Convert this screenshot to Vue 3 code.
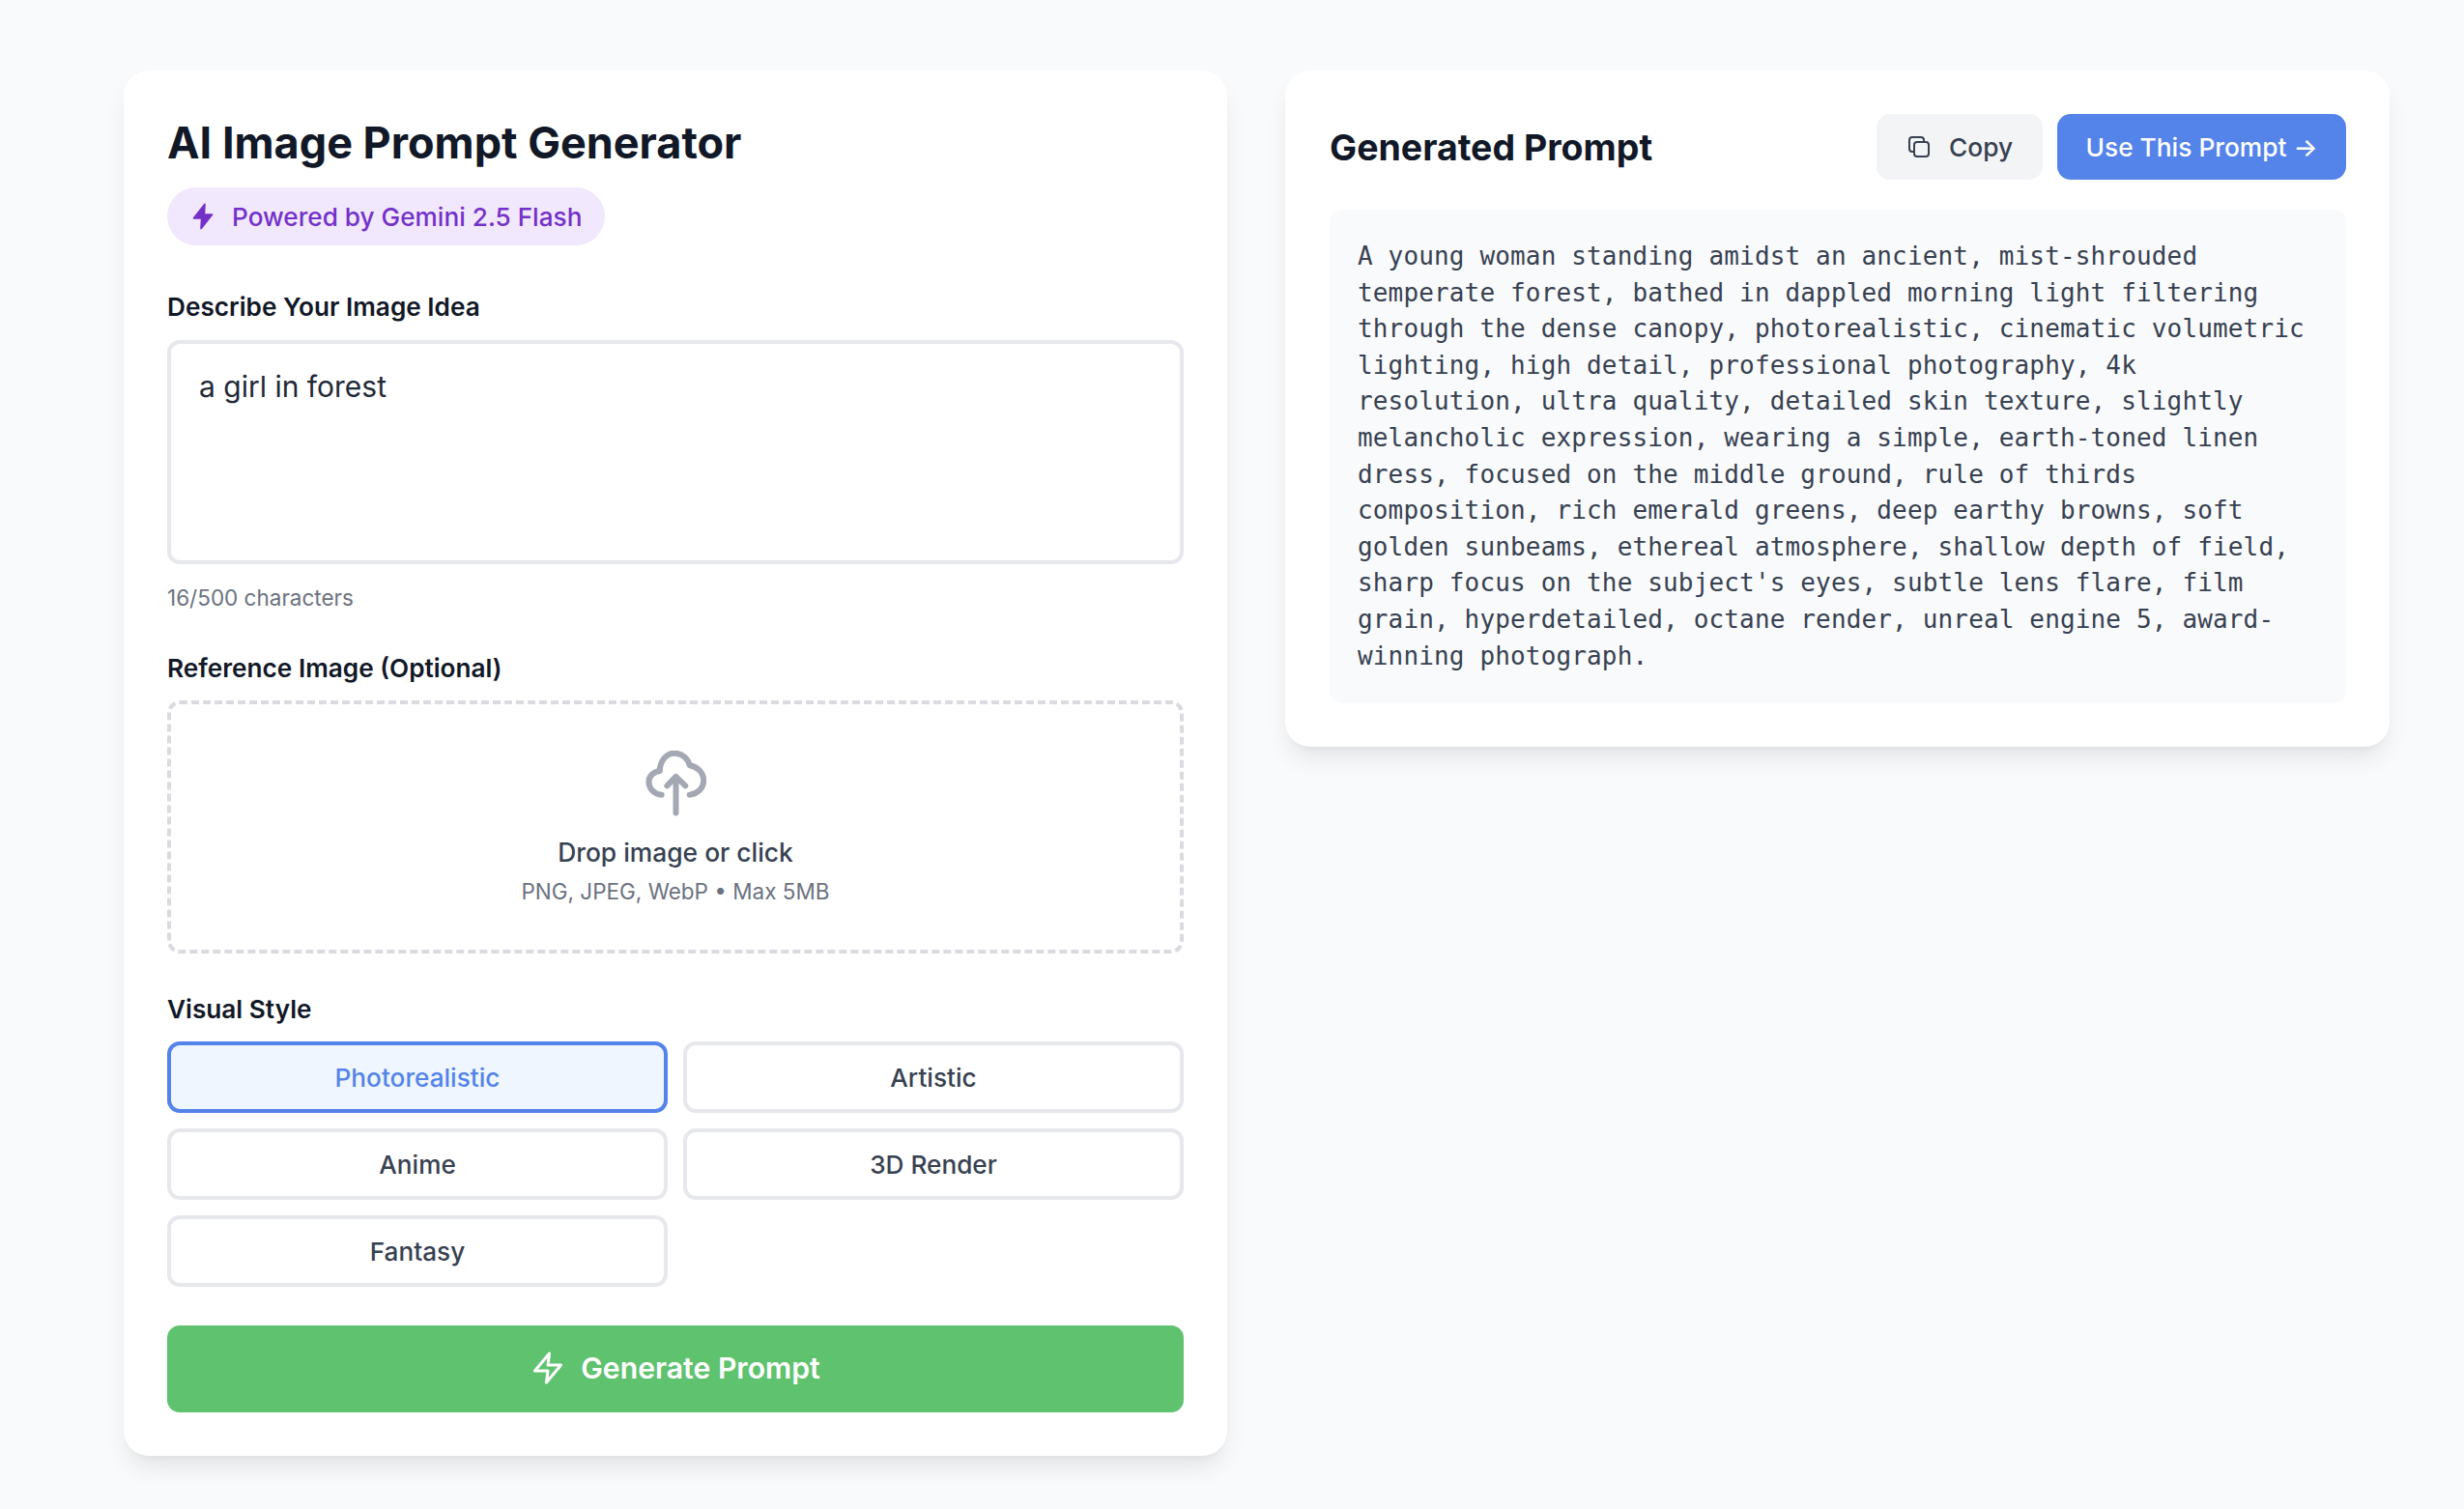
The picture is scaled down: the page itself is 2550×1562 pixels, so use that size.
<script setup>
import { ref } from 'vue'

const idea = ref('a girl in forest')
const activeStyle = ref('Photorealistic')
const styles = ['Photorealistic', 'Artistic', 'Anime', '3D Render', 'Fantasy']
const prompt = "A young woman standing amidst an ancient, mist-shrouded temperate forest, bathed in dappled morning light filtering through the dense canopy, photorealistic, cinematic volumetric lighting, high detail, professional photography, 4k resolution, ultra quality, detailed skin texture, slightly melancholic expression, wearing a simple, earth-toned linen dress, focused on the middle ground, rule of thirds composition, rich emerald greens, deep earthy browns, soft golden sunbeams, ethereal atmosphere, shallow depth of field, sharp focus on the subject's eyes, subtle lens flare, film grain, hyperdetailed, octane render, unreal engine 5, award-winning photograph."
</script>

<template>
  <div class="page">
    <section class="card">
      <h1 class="title">AI Image Prompt Generator</h1>
      <div class="badge">
        <svg class="badge-icon" viewBox="0 0 24 24"><polygon points="13.5 2 4.5 13.5 11 13.5 10.5 22 19.5 10.5 13 10.5 13.5 2" /></svg>
        Powered by Gemini 2.5 Flash
      </div>

      <label class="label first">Describe Your Image Idea</label>
      <textarea class="idea" v-model="idea"></textarea>
      <div class="counter">{{ idea.length }}/500 characters</div>

      <label class="label second">Reference Image (Optional)</label>
      <div class="drop">
        <svg class="cloud" viewBox="-3 0 200 215" fill="none" stroke="#a3a8b2" stroke-width="19" stroke-linecap="round" stroke-linejoin="round">
          <path d="M50 145C25 142 8 125 8 102C8 82 25 68 44 66C44 35 65 8 92 8C118 8 138 28 142 48C168 52 188 72 188 98C188 122 168 142 142 145" />
          <path d="M97 204V85M68 115L97 85L128 115" />
        </svg>
        <div class="drop-title">Drop image or click</div>
        <div class="drop-sub">PNG, JPEG, WebP • Max 5MB</div>
      </div>

      <label class="label third">Visual Style</label>
      <div class="styles">
        <button v-for="s in styles" :key="s" class="style" :class="{ active: s === activeStyle }" @click="activeStyle = s">{{ s }}</button>
      </div>

      <button class="generate">
        <svg class="gen-icon" viewBox="0 0 24 24" fill="none" stroke="#fff" stroke-width="2" stroke-linejoin="round" stroke-linecap="round"><polygon points="13 2 3 14 12 14 11 22 21 10 12 10 13 2" /></svg>
        Generate Prompt
      </button>
    </section>

    <section class="card result">
      <div class="result-head">
        <h2 class="result-title">Generated Prompt</h2>
        <div class="actions">
          <button class="copy">
            <svg class="copy-icon" viewBox="0 0 24 24" fill="none" stroke="#374151" stroke-width="2" stroke-linecap="round" stroke-linejoin="round">
              <rect x="7" y="7" width="15" height="15" rx="3" />
              <path d="M17 7V5a3 3 0 0 0-3-3H5a3 3 0 0 0-3 3v9a3 3 0 0 0 3 3h2" />
            </svg>
            Copy
          </button>
          <button class="use">Use This Prompt →</button>
        </div>
      </div>
      <div class="output">{{ prompt }}</div>
    </section>
  </div>
</template>

<style>
body {
  background: #f9fafb;
}
</style>

<style scoped>
.page {
  display: grid;
  grid-template-columns: 1142px 1142px;
  gap: 60px;
  align-items: start;
  padding: 73px 78px 56px 128px;
  font-family: Inter, "Liberation Sans", sans-serif;
  color: #111827;
}

.card {
  box-sizing: border-box;
  background: #fff;
  border-radius: 26px;
  padding: 45px;
  box-shadow: 0 16px 26px -5px rgba(0, 0, 0, 0.09), 0 6px 10px -6px rgba(0, 0, 0, 0.06);
  display: flex;
  flex-direction: column;
}

.result {
  padding-left: 46px;
  width: 1143px;
}

.title {
  margin: 0;
  font-size: 45px;
  line-height: 60px;
  font-weight: 700;
}

.badge {
  align-self: flex-start;
  display: flex;
  align-items: center;
  gap: 15px;
  height: 60px;
  margin-top: 16px;
  padding: 0 24px 0 22px;
  border-radius: 30px;
  background: #f1e8fd;
  color: #7431c9;
  font-size: 26.2px;
  font-weight: 500;
}

.badge-icon {
  width: 30px;
  height: 30px;
  fill: #7431c9;
  stroke: #7431c9;
  stroke-width: 1.5;
  stroke-linejoin: round;
}

.label {
  display: block;
  font-size: 26.2px;
  line-height: 38px;
  font-weight: 600;
  color: #111827;
}

.label.first {
  margin-top: 45px;
}

.label.second {
  margin-top: 40px;
}

.label.third {
  margin-top: 39px;
}

.idea {
  display: block;
  box-sizing: border-box;
  width: 100%;
  height: 232px;
  margin-top: 15px;
  padding: 24px 29px;
  border: 4px solid #e7e8ec;
  border-radius: 13px;
  font: 400 30px/40px Inter, "Liberation Sans", sans-serif;
  color: #1f2937;
  resize: none;
  outline: none;
}

.counter {
  margin-top: 21px;
  font-size: 22.5px;
  line-height: 28px;
  color: #6b7280;
}

.drop {
  box-sizing: border-box;
  height: 262px;
  margin-top: 14px;
  border: 4px dashed #d9dbe0;
  border-radius: 13px;
  display: flex;
  flex-direction: column;
  align-items: center;
  padding-top: 48px;
}

.cloud {
  width: 63px;
  height: 68px;
}

.drop-title {
  margin-top: 18px;
  font-size: 26.4px;
  line-height: 38px;
  font-weight: 500;
  color: #374151;
}

.drop-sub {
  margin-top: 5px;
  font-size: 22.5px;
  line-height: 34px;
  color: #6b7280;
}

.styles {
  display: grid;
  grid-template-columns: 1fr 1fr;
  gap: 16px;
  margin-top: 14px;
}

button {
  font-family: inherit;
  cursor: pointer;
}

.style {
  height: 74px;
  border: 4px solid #e7e8ec;
  border-radius: 13px;
  background: #fff;
  color: #374151;
  font-size: 26.2px;
  font-weight: 500;
}

.style.active {
  border-color: #5484ea;
  background: #eff6ff;
  color: #5484ea;
}

.generate {
  display: flex;
  align-items: center;
  justify-content: center;
  gap: 16px;
  height: 90px;
  margin-top: 40px;
  padding: 0 0 2px;
  border: 0;
  border-radius: 13px;
  background: #5fc26f;
  color: #fff;
  font-size: 30.2px;
  font-weight: 600;
}

.gen-icon {
  width: 36px;
  height: 36px;
}

.result-head {
  display: flex;
  align-items: center;
  justify-content: space-between;
}

.result-title {
  margin: 0;
  font-size: 37.5px;
  font-weight: 700;
  color: #111827;
}

.actions {
  display: flex;
  gap: 15px;
}

.copy,
.use {
  height: 68px;
  border: 0;
  border-radius: 14px;
  font-size: 26.3px;
  font-weight: 500;
}

.copy {
  display: flex;
  align-items: center;
  gap: 19px;
  width: 172px;
  padding: 0 0 0 1px;
  justify-content: center;
  background: #f3f4f6;
  color: #374151;
}

.copy-icon {
  width: 24px;
  height: 24px;
}

.use {
  width: 299px;
  padding: 0;
  background: #5484ea;
  color: #fff;
}

.output {
  margin-top: 31px;
  padding: 30px 29px 30px;
  background: #f9fafb;
  border-radius: 13px;
  font-family: "DejaVu Sans Mono", monospace;
  font-size: 26px;
  letter-spacing: 0.15px;
  line-height: 37.6px;
  color: #374151;
}
</style>
